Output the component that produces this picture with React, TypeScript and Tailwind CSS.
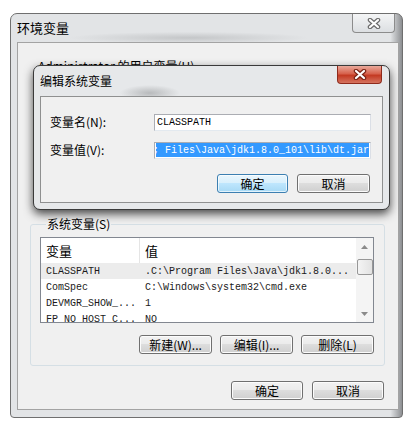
import clsx from 'clsx';
import type { ReactNode } from 'react';

const mono = "font-['Liberation_Mono','Noto_Sans_CJK_SC',monospace]";

const CloseGlyph = ({ outline }: { outline: string }) => (
  <svg width="14" height="11" viewBox="0 0 14 11">
    <path d="M3 2 L11 9 M11 2 L3 9" stroke={outline} strokeWidth="4.5" strokeLinecap="round" fill="none" />
    <path d="M3 2 L11 9 M11 2 L3 9" stroke="#fff" strokeWidth="2.2" strokeLinecap="round" fill="none" />
  </svg>
);

const WinButton = ({
  children,
  primary,
  className,
}: {
  children: ReactNode;
  primary?: boolean;
  className?: string;
}) => (
  <button
    className={clsx(
      'flex h-[19px] items-center justify-center rounded-[3px] border text-[12px] leading-none text-black',
      primary
        ? 'border-[#3c7fb1] bg-[linear-gradient(#eaf6fd,#d9f0fc_45%,#bee6fd_50%,#a7d9f5)] shadow-[inset_0_0_0_1px_#ffffffaa]'
        : 'border-[#707070] bg-[linear-gradient(#f2f2f2,#ebebeb_45%,#dddddd_50%,#cfcfcf)] shadow-[inset_0_0_0_1px_#fcfcfc]',
      className,
    )}
  >
    {children}
  </button>
);

const Arrow = ({ down }: { down?: boolean }) => (
  <svg width="7" height="4" viewBox="0 0 7 4">
    <path d={down ? 'M0 0 L7 0 L3.5 4 Z' : 'M0 4 L7 4 L3.5 0 Z'} fill="#8a8a8a" />
  </svg>
);

const rows = [
  { name: 'CLASSPATH', value: '.C:\\Program Files\\Java\\jdk1.8.0...', selected: true },
  { name: 'ComSpec', value: 'C:\\Windows\\system32\\cmd.exe' },
  { name: 'DEVMGR_SHOW_...', value: '1' },
  { name: 'FP_NO_HOST_C...', value: 'NO' },
];

export default function App() {
  return (
    <div className="relative h-[429px] w-[420px] overflow-hidden bg-white font-['Noto_Sans_CJK_SC',sans-serif] text-black">
      {/* 环境变量 window */}
      <div className="relative ml-[10px] mt-[13px] flex h-[405px] w-[393px] flex-col rounded-t-[7px] rounded-b-[4px] border border-[#6f6f6f] bg-[linear-gradient(to_right,#e2e4e6_97%,#8d8f92)] pb-[7px] pl-[6px] pr-[3px]">
        <div className="flex h-[28px] items-center bg-[radial-gradient(ellipse_120px_6px_at_45%_85%,#c4c6c8,transparent)] text-[13px]">
          环境变量
        </div>
        <button className="absolute right-[7px] top-0 flex h-[19px] w-[43px] items-center justify-center rounded-b-[4px] border border-t-0 border-[#8c8c8c] bg-[linear-gradient(#f4f5f6,#dcdfe2)]">
          <CloseGlyph outline="#6b6b6b" />
        </button>

        <div className="flex flex-1 flex-col border border-[#a3a3a3] bg-[#f0f0f0]">
          <div className="pl-[20px] pt-[15px] text-[12px] leading-[16px]">Administrator 的用户变量(U)</div>

          {/* user variables, covered by the edit dialog */}
          <div className="h-[142px] pl-[22px] pr-[24px] pt-[8px]">
            <div className="h-[96px] border border-[#828790] bg-white" />
          </div>

          <fieldset className="ml-[12px] mr-[13px] rounded-[3px] border border-[#d5dfe5] pb-[11px] pl-[9px] pr-[10px] pt-[5px]">
            <legend className="ml-[6px] px-[1px] text-[12px] leading-[16px]">系统变量(S)</legend>

            <div className="flex h-[86px] overflow-hidden border border-[#828790] bg-white">
              <div className="flex-1 overflow-hidden">
                <div className="flex h-[25px] items-center text-[13px]">
                  <div className="flex h-full w-[99px] items-center border-r border-[#e5e5e5] pl-[5px]">变量</div>
                  <div className="pl-[5px]">值</div>
                </div>
                {rows.map((r) => (
                  <div
                    key={r.name}
                    className={clsx('flex h-[16px] items-center text-[10px] text-[#1a1a1a]', mono, r.selected && 'bg-[#ececec]')}
                  >
                    <div className="w-[99px] whitespace-nowrap pl-[5px]">{r.name}</div>
                    <div className="whitespace-nowrap pl-[5px]">{r.value}</div>
                  </div>
                ))}
              </div>
              <div className="flex w-[17px] flex-col items-center bg-[#f4f4f4]">
                <div className="flex h-[17px] items-center">
                  <Arrow />
                </div>
                <div className="mt-[4px] h-[16px] w-[16px] rounded-[2px] border border-[#979797] bg-[linear-gradient(to_right,#f4f4f4,#e2e2e2)]" />
                <div className="mt-auto flex h-[17px] items-center">
                  <Arrow down />
                </div>
              </div>
            </div>

            <div className="mt-[12px] flex justify-end gap-[8px]">
              <WinButton className="w-[73px]">新建(W)...</WinButton>
              <WinButton className="w-[73px]">编辑(I)...</WinButton>
              <WinButton className="w-[73px]">删除(L)</WinButton>
            </div>
          </fieldset>

          <div className="mt-[15px] flex justify-end gap-[9px] pr-[14px]">
            <WinButton className="w-[72px]">确定</WinButton>
            <WinButton className="w-[72px]">取消</WinButton>
          </div>
        </div>
      </div>

      {/* 编辑系统变量 dialog */}
      <div className="absolute left-[33px] top-[65px] flex h-[145px] w-[357px] flex-col rounded-[7px] border border-[#3a3a3a] bg-[#e6e8ea] px-[6px] pb-[6px] shadow-[0_4px_10px_rgba(0,0,0,0.7)]">
        <div className="flex h-[30px] items-center bg-[radial-gradient(ellipse_30px_8px_at_32%_90%,#b8babc,transparent)] text-[12px]">
          编辑系统变量
        </div>
        <button className="absolute right-[7px] top-0 flex h-[18px] w-[45px] items-center justify-center rounded-b-[4px] border border-t-0 border-[#8e2a1c] bg-[linear-gradient(#e9a99b,#d7624c_45%,#c43a22_55%,#d5735f)]">
          <CloseGlyph outline="#7a2416" />
        </button>

        <div className="flex flex-1 flex-col border border-[#8f9090] bg-[#f0f0f0] pl-[9px] pr-[11px] pt-[16px]">
          <div className="grid grid-cols-[104px_217px] items-center gap-y-[10px] text-[12px]">
            <div>变量名(N):</div>
            <div className={clsx('flex h-[17px] items-center border border-[#abadb3] border-b-[#e3e9ef] border-r-[#dbdfe6] bg-white pl-[2px] text-[10px]', mono)}>
              CLASSPATH
            </div>
            <div>变量值(V):</div>
            <div className="flex h-[17px] items-center border border-[#abadb3] border-b-[#e3e9ef] border-r-[#dbdfe6] bg-white px-[1px]">
              <div className={clsx('flex h-[14px] w-full items-center justify-end overflow-hidden whitespace-nowrap bg-[#3399ff] text-[10px] text-white', mono)}>
                ; Files\Java\jdk1.8.0_101\lib\dt.jar
              </div>
            </div>
          </div>
          <div className="mr-[1px] mt-[15px] flex justify-end gap-[9px]">
            <WinButton primary className="w-[71px]">确定</WinButton>
            <WinButton className="w-[73px]">取消</WinButton>
          </div>
        </div>
      </div>
    </div>
  );
}
